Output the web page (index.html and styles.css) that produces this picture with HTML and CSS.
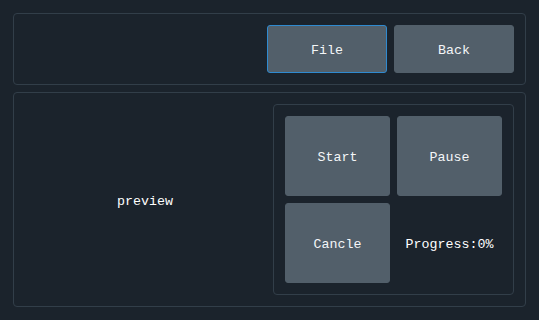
FILE: index.html
```html
<!DOCTYPE html>
<html>

<head>
    <meta charset="UTF-8">
    <title>Preview</title>
    <link rel="stylesheet" href="styles.css">
</head>

<body>
    <div class="frame toolbar">
        <button class="btn btn-wide active">File</button>
        <button class="btn btn-wide">Back</button>
    </div>
    <div class="frame main">
        <div class="preview">preview</div>
        <div class="panel">
            <button class="btn btn-square">Start</button>
            <button class="btn btn-square">Pause</button>
            <button class="btn btn-square">Cancle</button>
            <div class="progress">Progress:0%</div>
        </div>
    </div>
</body>

</html>
```
FILE: styles.css
```css
body {
    margin: 0;
    padding: 13px;
    background-color: #1b232c;
    color: #ffffff;
    font-family: "Liberation Mono", "DejaVu Sans Mono", monospace;
    font-size: 13.3px;
    display: flex;
    flex-direction: column;
    gap: 7px;
    height: 320px;
    box-sizing: border-box;
}

.frame {
    border: 1px solid #323e49;
    border-radius: 4px;
    padding: 11px;
}

.toolbar {
    display: flex;
    justify-content: flex-end;
    gap: 7px;
}

.main {
    display: flex;
    flex: 1;
}

.preview {
    flex: 1;
    display: flex;
    align-items: center;
    justify-content: center;
    padding: 3px 8px 0 0;
}

.panel {
    border: 1px solid #323e49;
    border-radius: 4px;
    padding: 11px;
    display: grid;
    grid-template-columns: 105px 105px;
    grid-template-rows: 80px 80px;
    gap: 7px;
}

.btn {
    background-color: #525f6a;
    color: #f4f6f8;
    font-family: inherit;
    font-size: inherit;
    border: 1px solid #525f6a;
    border-radius: 3px;
    padding: 3px 0 0;
    cursor: pointer;
}

.btn-wide {
    width: 120px;
    height: 48px;
}

.btn.active {
    border-color: #2f8ad0;
}

.progress {
    display: flex;
    align-items: center;
    justify-content: center;
    padding-top: 3px;
}
```
